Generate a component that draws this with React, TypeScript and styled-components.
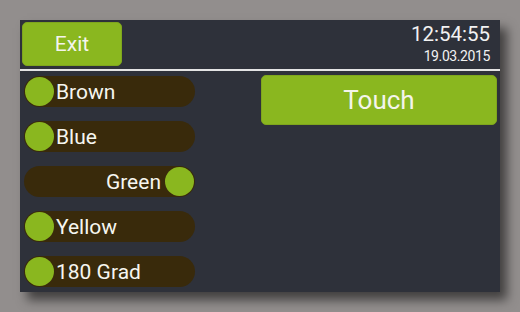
import styled, { createGlobalStyle } from "styled-components";

const GlobalStyle = createGlobalStyle`
  html, body {
    margin: 0;
    padding: 0;
    background: #928e8d;
    font-family: Roboto, "Liberation Sans", sans-serif;
  }
`;

const Page = styled.div`
  width: 520px;
  height: 312px;
  padding: 20px;
  box-sizing: border-box;
`;

const Panel = styled.div`
  width: 480px;
  height: 272px;
  background: #2e313a;
  box-shadow: 7px 8px 10px rgba(0, 0, 0, 0.55);
  display: flex;
  flex-direction: column;
`;

const Header = styled.div`
  height: 47px;
  display: flex;
  justify-content: space-between;
  padding: 2px 10px 0 2px;
  border-bottom: 2px solid #e4e4e4;
`;

const GreenButton = styled.button<{ $w: number; $h: number; $size: number }>`
  width: ${(p) => p.$w}px;
  height: ${(p) => p.$h}px;
  background: #8ab71f;
  border: 1px solid #7fa61d;
  border-radius: 5px;
  color: #f4f4ec;
  font-family: Roboto, "Liberation Sans", sans-serif;
  font-size: ${(p) => p.$size}px;
  padding: 0;
  cursor: pointer;
`;

const Clock = styled.div`
  display: flex;
  flex-direction: column;
  align-items: flex-end;
  color: #f2f2f2;
`;

const Time = styled.div`
  font-size: 20.5px;
  line-height: 24px;
`;

const DateText = styled.div`
  font-size: 14px;
  line-height: 16px;
  letter-spacing: -0.4px;
  margin-top: 2px;
`;

const Body = styled.div`
  display: flex;
  justify-content: space-between;
  padding: 5px 3px 0 4px;
`;

const ToggleList = styled.div`
  width: 171px;
  display: flex;
  flex-direction: column;
  gap: 14px;
`;

const Toggle = styled.div<{ $on?: boolean }>`
  height: 31px;
  border-radius: 16px;
  background: #392a0b;
  display: flex;
  align-items: center;
  flex-direction: ${(p) => (p.$on ? "row-reverse" : "row")};
  gap: ${(p) => (p.$on ? 4 : 2)}px;
  padding: 0 1px;
`;

const Knob = styled.span`
  width: 29px;
  height: 29px;
  border-radius: 50%;
  background: #8ab71f;
  flex-shrink: 0;
`;

const Label = styled.span`
  color: #f6f6f0;
  font-size: 21px;
`;

const TouchWrap = styled.div`
  margin-top: -1px;
`;

const items: { label: string; on?: boolean }[] = [
  { label: "Brown" },
  { label: "Blue" },
  { label: "Green", on: true },
  { label: "Yellow" },
  { label: "180 Grad" },
];

export default function App() {
  return (
    <>
      <GlobalStyle />
      <Page>
        <Panel>
          <Header>
            <GreenButton $w={100} $h={44} $size={21}>
              Exit
            </GreenButton>
            <Clock>
              <Time>12:54:55</Time>
              <DateText>19.03.2015</DateText>
            </Clock>
          </Header>
          <Body>
            <ToggleList>
              {items.map((it) => (
                <Toggle key={it.label} $on={it.on}>
                  <Knob />
                  <Label>{it.label}</Label>
                </Toggle>
              ))}
            </ToggleList>
            <TouchWrap>
              <GreenButton $w={236} $h={50} $size={26}>
                Touch
              </GreenButton>
            </TouchWrap>
          </Body>
        </Panel>
      </Page>
    </>
  );
}
